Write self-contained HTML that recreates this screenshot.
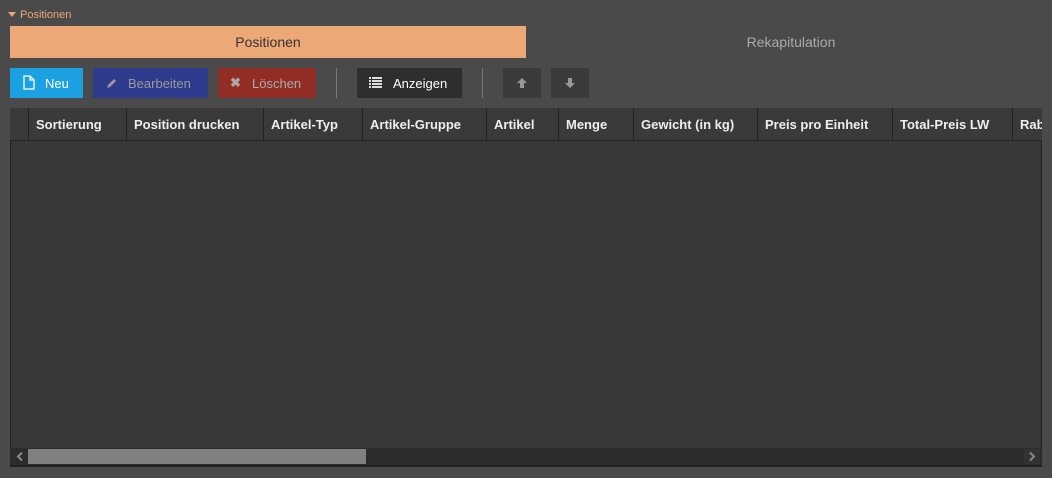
<!DOCTYPE html>
<html><head><style>
body{margin:0;width:1052px;height:478px;background:#4a4a4a;font-family:"Liberation Sans",sans-serif;position:relative;overflow:hidden}
.a{position:absolute}
.btn{position:absolute;top:68px;height:30px;font-size:13px;line-height:31px;color:#fff;box-sizing:border-box}
.h{position:absolute;top:108px;height:32px;line-height:34px;font-size:13px;font-weight:bold;color:#eee;border-left:1px solid #222;padding-left:7px;box-sizing:border-box;white-space:nowrap;overflow:hidden}
</style></head><body>
<div class="a" style="left:8px;top:9px;font-size:11px;color:#eaa677"><span style="display:inline-block;width:0;height:0;border-left:4px solid transparent;border-right:4px solid transparent;border-top:5px solid #eaa677;margin-right:4px;vertical-align:1px"></span>Positionen</div>
<div class="a" style="left:10px;top:26px;width:516px;height:32px;background:#eca877;color:#333;font-size:14px;line-height:33px;text-align:center">Positionen</div>
<div class="a" style="left:526px;top:26px;width:530px;height:32px;color:#aaa;font-size:14px;line-height:33px;text-align:center">Rekapitulation</div>

<div class="btn" style="left:10px;width:73px;background:#1ba1e2;padding-left:35px">Neu</div>
<svg class="a" style="left:23px;top:75px" width="12" height="15" viewBox="0 0 12 15"><path d="M1 1H7L11 5V14H1Z M7 1V5H11" fill="none" stroke="#fff" stroke-width="1.3"/></svg>
<div class="btn" style="left:93px;width:115px;background:#2e3a8c;color:#999;padding-left:35px">Bearbeiten</div>
<svg class="a" style="left:106px;top:77px" width="12" height="12" viewBox="0 0 12 12"><path d="M1 11L2 8L8 2L10 4L4 10Z" fill="#999"/></svg>
<div class="btn" style="left:218px;width:98px;background:#922d25;color:#aaa;padding-left:34px">Löschen</div>
<div class="a" style="left:230px;top:75px;color:#aaa;font-size:13px;font-weight:bold">✖</div>
<div class="a" style="left:336px;top:68px;width:1px;height:30px;background:#777"></div>
<div class="btn" style="left:357px;width:105px;background:#2e2e2e;padding-left:36px">Anzeigen</div>
<svg class="a" style="left:369px;top:77px" width="13" height="11" viewBox="0 0 13 11"><path d="M0 0h2v2H0zM3 0h10v2H3zM0 3h2v2H0zM3 3h10v2H3zM0 6h2v2H0zM3 6h10v2H3zM0 9h2v2H0zM3 9h10v2H3z" fill="#ddd"/></svg>
<div class="a" style="left:482px;top:68px;width:1px;height:30px;background:#777"></div>
<div class="btn" style="left:503px;width:38px;background:#3b3b3b"></div>
<svg class="a" style="left:516px;top:77px" width="12" height="12" viewBox="0 0 12 12"><path d="M6 1L11 6H8V11H4V6H1Z" fill="#999"/></svg>
<div class="btn" style="left:551px;width:38px;background:#3b3b3b"></div>
<svg class="a" style="left:564px;top:77px" width="12" height="12" viewBox="0 0 12 12"><path d="M6 11L11 6H8V1H4V6H1Z" fill="#999"/></svg>

<div class="a" style="left:10px;top:108px;width:1032px;height:359px;background:#383838;overflow:hidden"></div>
<div class="a" style="left:10px;top:108px;width:1032px;height:32px;background:#3a3a3a;border-bottom:1px solid #222"></div>
<div class="h" style="left:28px;width:98px">Sortierung</div>
<div class="h" style="left:126px;width:137px">Position drucken</div>
<div class="h" style="left:263px;width:99px">Artikel-Typ</div>
<div class="h" style="left:362px;width:124px">Artikel-Gruppe</div>
<div class="h" style="left:486px;width:72px">Artikel</div>
<div class="h" style="left:558px;width:75px">Menge</div>
<div class="h" style="left:633px;width:124px">Gewicht (in kg)</div>
<div class="h" style="left:757px;width:135px">Preis pro Einheit</div>
<div class="h" style="left:892px;width:120px">Total-Preis LW</div>
<div class="h" style="left:1012px;width:30px">Rabatt</div>
<div class="a" style="left:10px;top:141px;width:1px;height:326px;background:#222"></div>
<div class="a" style="left:1041px;top:141px;width:1px;height:326px;background:#222"></div>
<div class="a" style="left:10px;top:448px;width:1032px;height:17px;background:#2c2c2c"></div>
<div class="a" style="left:28px;top:449px;width:338px;height:15px;background:#808080"></div>
<svg class="a" style="left:16px;top:452px" width="8" height="9" viewBox="0 0 8 9"><path d="M6 0.5L2 4.5L6 8.5" fill="none" stroke="#888" stroke-width="2"/></svg>
<div class="a" style="left:1024px;top:449px;width:16px;height:15px;background:#333"></div>
<svg class="a" style="left:1028px;top:452px" width="8" height="9" viewBox="0 0 8 9"><path d="M2 0.5L6 4.5L2 8.5" fill="none" stroke="#888" stroke-width="2"/></svg>
<div class="a" style="left:10px;top:465px;width:1032px;height:2px;background:#222"></div>
</body></html>
